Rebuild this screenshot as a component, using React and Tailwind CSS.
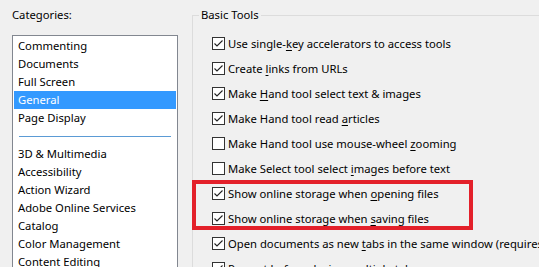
import React from "react";

const categoriesTop = ["Commenting", "Documents", "Full Screen", "General", "Page Display"];
const categoriesBottom = [
  "3D & Multimedia",
  "Accessibility",
  "Action Wizard",
  "Adobe Online Services",
  "Catalog",
  "Color Management",
  "Content Editing",
];

// label parts: [before, accessKey, after]
const options = [
  { on: true, label: ["Use single-", "k", "ey accelerators to access tools"] },
  { on: true, label: ["Create ", "l", "inks from URLs"] },
  { on: true, label: ["Make ", "H", "and tool select text & images"] },
  { on: true, label: ["Make Hand tool read ", "a", "rticles"] },
  { on: false, label: ["Make Hand tool use mouse-wheel ", "z", "ooming"] },
  { on: false, label: ["Make Select tool select ", "i", "mages before text"] },
  { on: true, label: ["Show online storage when ", "o", "pening files"] },
  { on: true, label: ["Show online storage when ", "s", "aving files"] },
  { on: true, label: ["Open documents as new ", "t", "abs in the same window (requires"] },
  { on: true, label: ["Prompt before closing multiple tabs", "", ""] },
];

function Checkbox({ on }) {
  return (
    <span className="w-[13px] h-[13px] shrink-0 border border-[#333333] bg-white flex items-center justify-center">
      {on && (
        <svg width="11" height="11" viewBox="0 0 11 11" fill="none">
          <path d="M1.5 5.5 L4 8 L9.5 2.5" stroke="#222222" strokeWidth="1.1" />
        </svg>
      )}
    </span>
  );
}

function Option({ on, label }) {
  const [a, k, b] = label;
  return (
    <div className="h-[25px] flex items-center gap-[3px] whitespace-nowrap">
      <Checkbox on={on} />
      <span>
        {a}
        {k && <u className="underline-offset-[2px]">{k}</u>}
        {b}
      </span>
    </div>
  );
}

export default function App() {
  return (
    <div className="w-[539px] h-[267px] bg-[#f0f0f0] overflow-hidden flex text-[11.25px] leading-[18px] text-black relative font-['Noto_Sans','Liberation_Sans',sans-serif]">
      {/* Categories */}
      <div className="w-[178px] shrink-0 pl-[12px] pt-[6px]">
        <div className="h-[29px]">Categories:</div>
        <div className="border border-[#828790] bg-white h-[240px] pt-[1px] px-[1px]">
          {categoriesTop.map((c) => (
            <div
              key={c}
              className={
                c === "General" ? "h-[18px] pl-[4px] bg-[#3399ff] text-white" : "h-[18px] pl-[4px]"
              }
            >
              {c}
            </div>
          ))}
          <div className="h-[18px] flex items-center px-[5px]">
            <div className="h-px w-full bg-[#5b9bd5]" />
          </div>
          {categoriesBottom.map((c) => (
            <div key={c} className="h-[18px] pl-[4px] whitespace-nowrap">
              {c}
            </div>
          ))}
        </div>
      </div>

      {/* Basic Tools group */}
      <div className="flex-1 pl-[14px] pt-[7px]">
        <fieldset className="border-l border-t border-[#dcdcdc] h-[300px]">
          <legend className="ml-[6px] px-[2px] leading-[16px]">Basic Tools</legend>
          <div className="pt-[8px] pl-[19px]">
            {options.map((o, i) => (
              <Option key={i} {...o} />
            ))}
          </div>
        </fieldset>
      </div>

      {/* highlight annotation */}
      <div className="absolute left-[192px] top-[180px] w-[281px] h-[50px] border-[4px] border-[#e3202a]" />
    </div>
  );
}
